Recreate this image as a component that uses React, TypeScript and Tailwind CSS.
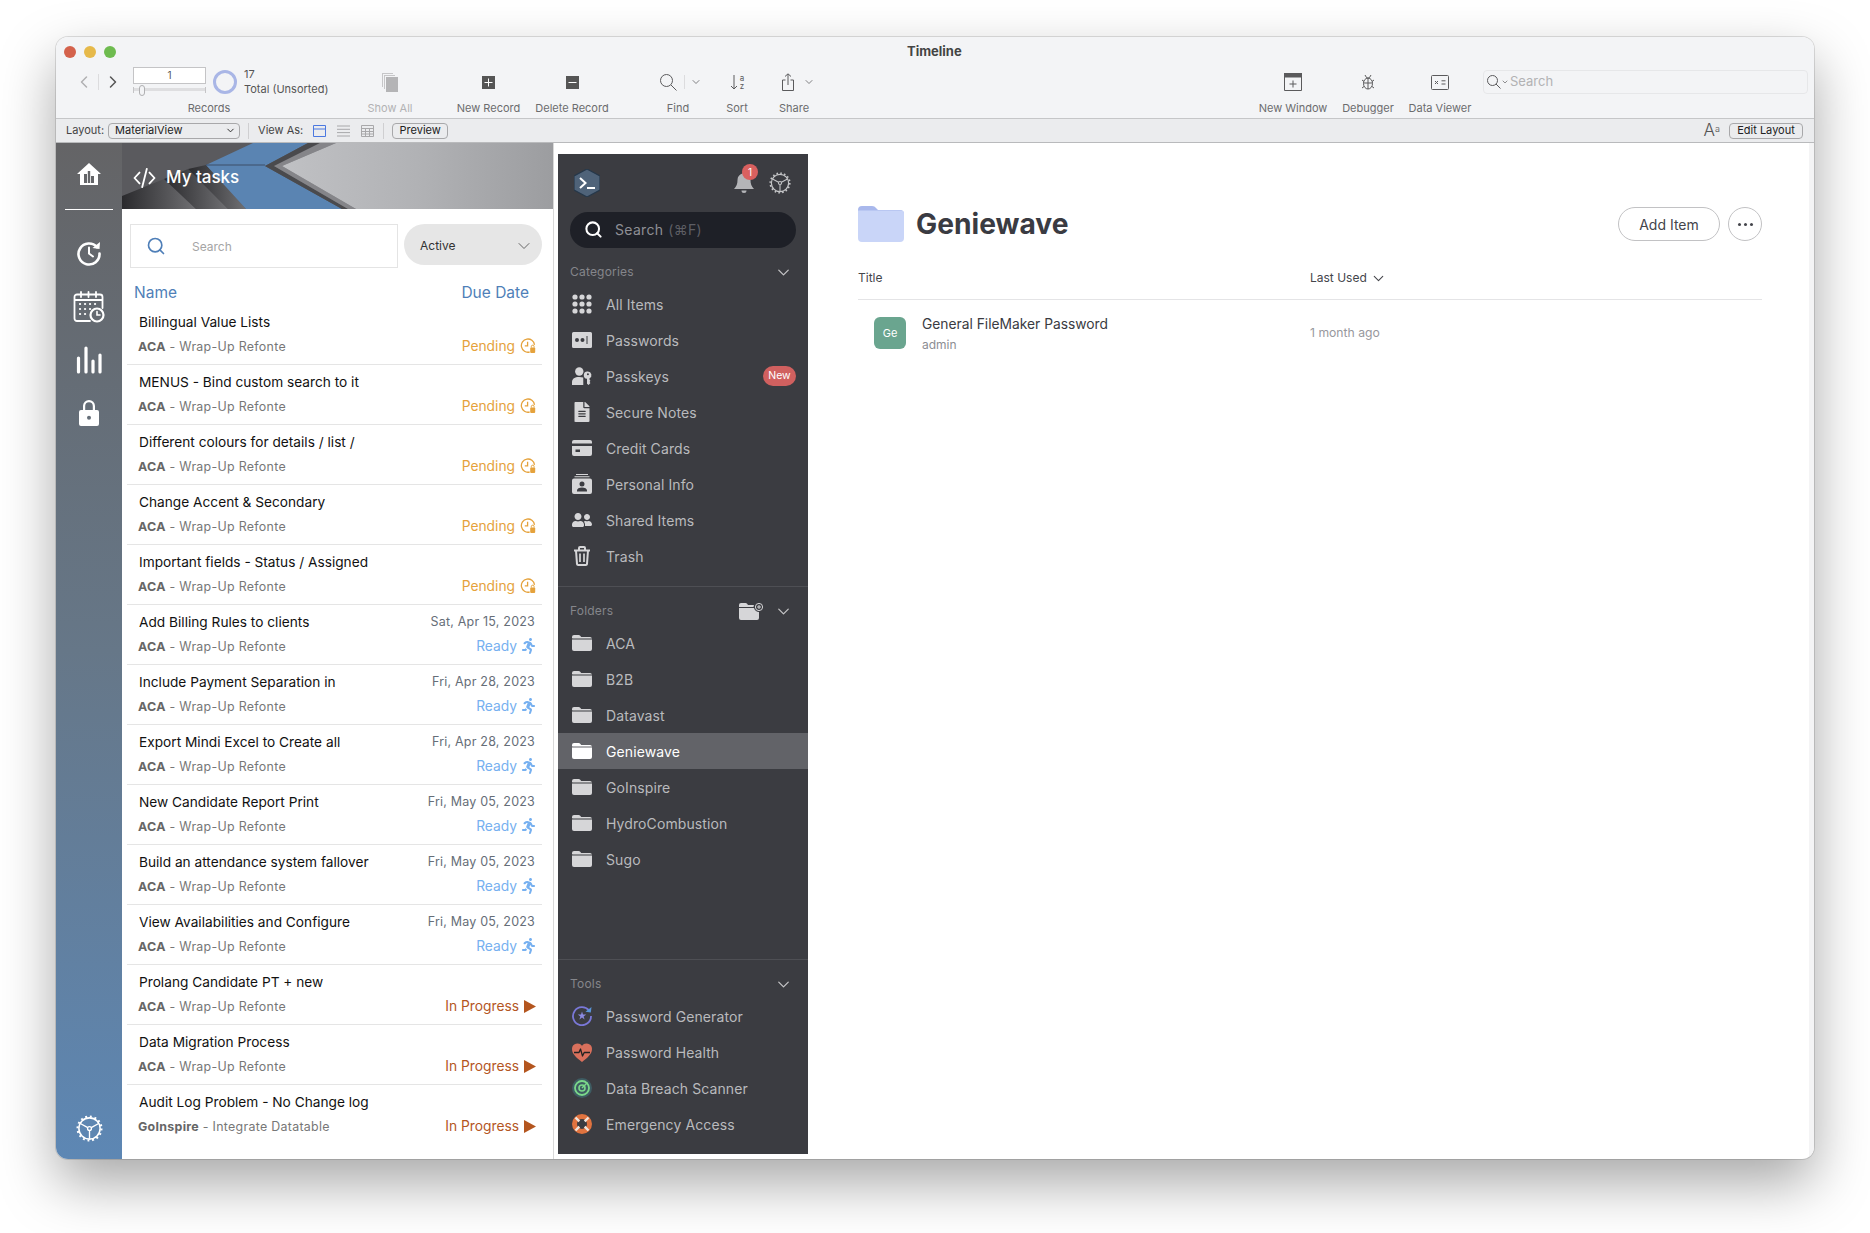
import type { ReactNode } from "react";
import { ChevronDown, ChevronLeft, ChevronRight, Search } from "lucide-react";
import { FaFileAlt, FaRunning, FaUserFriends } from "react-icons/fa";

const sans = "font-['Inter','Liberation_Sans',sans-serif]";

type Task = { title: string; client?: string; project?: string; date?: string; status: "Pending" | "Ready" | "In Progress" };

const tasks: Task[] = [
  { title: "Billingual Value Lists", status: "Pending" },
  { title: "MENUS - Bind custom search to it", status: "Pending" },
  { title: "Different colours for details / list /", status: "Pending" },
  { title: "Change Accent & Secondary", status: "Pending" },
  { title: "Important fields - Status / Assigned", status: "Pending" },
  { title: "Add Billing Rules to clients", date: "Sat, Apr 15, 2023", status: "Ready" },
  { title: "Include Payment Separation in", date: "Fri, Apr 28, 2023", status: "Ready" },
  { title: "Export Mindi Excel to Create all", date: "Fri, Apr 28, 2023", status: "Ready" },
  { title: "New Candidate Report Print", date: "Fri, May 05, 2023", status: "Ready" },
  { title: "Build an attendance system fallover", date: "Fri, May 05, 2023", status: "Ready" },
  { title: "View Availabilities and Configure", date: "Fri, May 05, 2023", status: "Ready" },
  { title: "Prolang Candidate PT + new", status: "In Progress" },
  { title: "Data Migration Process", status: "In Progress" },
  { title: "Audit Log Problem - No Change log", client: "GoInspire", project: "Integrate Datatable", status: "In Progress" },
];

function Gear({ className }: { className: string }) {
  return (
    <svg viewBox="0 0 28 28" className={className} fill="none" stroke="currentColor">
      <circle cx="14" cy="14" r="11" strokeWidth="1.6" />
      <circle cx="14" cy="14" r="12.4" strokeWidth="2.2" strokeDasharray="2 2.87" />
      <circle cx="14" cy="14" r="2" strokeWidth="1.4" />
      <path d="M12.2 13 4.5 8.8M15.8 13l7.7-4.2M14 16v8.5" strokeWidth="1.4" />
    </svg>
  );
}

function FolderGlyph({ className }: { className: string }) {
  return (
    <svg viewBox="0 0 20 16" className={className} fill="currentColor">
      <path d="M0 3.200V2a2 2 0 0 1 2-2h4.600c.7 0 1.200.3 1.600.8l1 1.200H18a2 2 0 0 1 2 1.600H1z" />
      <path d="M0 4.600h20V14a2 2 0 0 1-2 2H2a2 2 0 0 1-2-2z" />
    </svg>
  );
}

function PendingIcon() {
  return (
    <svg viewBox="0 0 16 16" className="h-[16px] w-[16px]" fill="none" stroke="#e5a23c" strokeWidth="1.300">
      <path d="M9.600 14A6.600 6.600 0 1 1 14.500 6.800" />
      <path d="M7.600 3.800v4H4.800" />
      <rect x="10.200" y="9.400" width="5" height="5.600" rx="1" fill="#e5a23c" stroke="none" />
      <path d="M11.300 9.600V8.600a1.400 1.400 0 0 1 2.800 0v1" strokeWidth="1" />
    </svg>
  );
}

function Status({ status }: { status: Task["status"] }) {
  if (status === "Pending") {
    return (
      <div className="mb-[2px] flex items-center gap-[5px] pr-[6px] text-[#e5a23c]">
        Pending <PendingIcon />
      </div>
    );
  }
  if (status === "Ready") {
    return (
      <div className="mb-[2px] flex items-center gap-[5px] pr-[7px] text-[#76b0f0]">
        Ready <FaRunning className="h-[16px] w-[13px]" />
      </div>
    );
  }
  return (
    <div className="mb-[2px] flex items-center gap-[5px] pr-[6px] text-[#b4561f]">
      In Progress
      <svg viewBox="0 0 12 13" className="h-[13px] w-[12px]" fill="currentColor">
        <path d="M0 0 12 6.500 0 13z" />
      </svg>
    </div>
  );
}

function TaskRow({ task }: { task: Task }) {
  return (
    <div className="h-[60px] border-b border-[#e5e5e5] pt-[7px] last:border-b-0">
      <div className="flex h-[20px] items-center justify-between pr-[7px] pl-[12px]">
        <span className="text-[13.700px] text-[#111]">{task.title}</span>
        {task.date && <span className="text-[12.500px] tracking-[0.2px] text-[#666e78]">{task.date}</span>}
      </div>
      <div className="mt-[5px] flex h-[20px] items-center justify-between pl-[11px] text-[13.800px]">
        <span className="mt-[1px] text-[12.400px] tracking-[0.3px] text-[#777]">
          <b className="font-bold text-[#666]">{task.client ?? "ACA"}</b> - {task.project ?? "Wrap-Up Refonte"}
        </span>
        <Status status={task.status} />
      </div>
    </div>
  );
}

function RailIcon({ children }: { children: ReactNode }) {
  return <div className="flex h-[52px] w-full items-center justify-center text-white">{children}</div>;
}

function Rail() {
  return (
    <div className="flex w-[66px] shrink-0 flex-col items-center bg-linear-to-b from-[#646466] via-[#667788] to-[#5d87b4] pb-[17px]">
      <div className="flex h-[66px] w-full items-center justify-center pb-[4px] text-white">
        <svg viewBox="0 0 24 22" className="h-[22px] w-[24px]" fill="currentColor">
          <path fillRule="evenodd" d="M12 0 24 11h-3v11H3V11H0zM7 11v9h3v-9zm3.800-3v12h2.400V8zM14 13v7h3v-7z" />
        </svg>
      </div>
      <div className="h-[1px] w-[48px] bg-white" />
      <div className="h-[17px]" />
      <RailIcon>
        <svg viewBox="0 0 26 26" className="h-[26px] w-[26px]" fill="none" stroke="currentColor" strokeWidth="2.600" strokeLinecap="round">
          <path d="M21 7.200A10.500 10.500 0 1 0 23.500 13.500" />
          <path d="M13 7.500v6l4 3" strokeWidth="2" />
          <path d="M24 2 23.500 9 16.500 8z" fill="currentColor" stroke="none" />
        </svg>
      </RailIcon>
      <div className="h-[2px]" />
      <RailIcon>
        <svg viewBox="0 0 32 32" className="h-[32px] w-[32px]" fill="none" stroke="currentColor" strokeWidth="1.800" strokeLinecap="round">
          <path d="M17 30H4a2.500 2.500 0 0 1-2.500-2.500V6A2.500 2.500 0 0 1 4 3.500h23A2.500 2.500 0 0 1 29.500 6v11" />
          <path d="M8 1v5M15.500 1v5M23 1v5M2 9h27" />
          <path d="M7 13h.1M12 13h.1M17 13h.1M22 13h.1M7 18h.1M12 18h.1M17 18h.1M7 23h.1M12 23h.1" strokeWidth="2.200" />
          <circle cx="24" cy="24" r="6.500" strokeWidth="2.200" />
          <path d="M24 20.500V24h3" strokeWidth="1.600" />
        </svg>
      </RailIcon>
      <div className="h-[1px]" />
      <RailIcon>
        <svg viewBox="0 0 26 28" className="h-[28px] w-[26px]" fill="none" stroke="currentColor" strokeWidth="3.200" strokeLinecap="round">
          <path d="M2.500 12v14M10 2v24M17 15v11M24 9v17" />
        </svg>
      </RailIcon>
      <div className="h-[1px]" />
      <RailIcon>
        <svg viewBox="0 0 20 26" className="h-[26px] w-[20px]" fill="currentColor">
          <path fillRule="evenodd" d="M4 10V6a6 6 0 0 1 12 0v4h2a2 2 0 0 1 2 2v12a2 2 0 0 1-2 2H2a2 2 0 0 1-2-2V12a2 2 0 0 1 2-2zm2.200 0h7.600V6a3.800 3.800 0 0 0-7.600 0zM10 15.800a2 2 0 1 0 0 4 2 2 0 0 0 0-4z" />
        </svg>
      </RailIcon>
      <div className="mt-auto text-white">
        <Gear className="h-[27px] w-[27px]" />
      </div>
    </div>
  );
}

function Banner() {
  return (
    <div className="relative h-[66px] overflow-hidden bg-[#5a5a5e]">
      <svg viewBox="0 0 431 66" preserveAspectRatio="none" className="absolute inset-0 h-full w-full">
        <defs>
          <linearGradient id="steel" x1="0" y1="0" x2="1" y2="0">
            <stop offset="0" stopColor="#c0c1c4" />
            <stop offset="0.5" stopColor="#b1b2b5" />
            <stop offset="1" stopColor="#9c9da0" />
          </linearGradient>
          <linearGradient id="stripe" x1="0" y1="0" x2="1" y2="0">
            <stop offset="0" stopColor="#2a2a2d" />
            <stop offset="1" stopColor="#707073" />
          </linearGradient>
        </defs>
        <path d="M0 53 42 36 74 66H0z" fill="url(#stripe)" />
        <path d="M42 36 66 26 106 66H74z" fill="url(#stripe)" />
        <path d="M66 26 84 22 124 66H106z" fill="url(#stripe)" />
        <path d="M84 22 131 0H186L143 23 220 66H124z" fill="#5a84b2" />
        <path d="M84 22h59" stroke="#3c4f68" strokeWidth="1" />
        <path d="M143 23 186 0H198L152 23 226 66H220z" fill="#4a4a4d" />
        <path d="M152 23 198 0H214L160 23 234 66H226z" fill="#858589" />
        <path d="M160 23 214 0H431V66H234z" fill="url(#steel)" />
      </svg>
      <div className="relative flex h-full items-center gap-[10px] pt-[3px] pl-[11px] text-white">
        <svg viewBox="0 0 24 22" className="h-[20px] w-[23px]" fill="none" stroke="currentColor" strokeWidth="2" strokeLinecap="round" strokeLinejoin="round">
          <path d="M6.500 5 1 11l5.500 6M17.500 5 23 11l-5.500 6M14.500 1 9.500 21" />
        </svg>
        <span className="text-[17px] font-medium">My tasks</span>
      </div>
    </div>
  );
}

function TasksPanel() {
  return (
    <div className="flex w-[432px] shrink-0 flex-col border-r border-[#d9d9d9] bg-white">
      <Banner />
      <div className="flex items-start pt-[15px] pl-[8px]">
        <div className="flex h-[44px] w-[268px] items-center border border-[#e4e4e4] pl-[15px] text-[#4f7fb8]">
          <Search className="h-[20px] w-[20px]" strokeWidth={2} />
          <span className="mt-[1px] ml-[26px] text-[12px] text-[#a5a5a5]">Search</span>
        </div>
        <div className="ml-[6px] flex h-[41px] w-[138px] items-center justify-between rounded-full bg-[#e6e6e6] pt-[2px] pr-[8px] pl-[16px] text-[12px] text-[#333]">
          Active <ChevronDown className="h-[20px] w-[20px] text-[#666]" strokeWidth={1.200} />
        </div>
      </div>
      <div className="flex h-[37px] items-end justify-between pr-[24px] pb-[1px] pl-[12px] text-[15.500px] text-[#4f7fb8]">
        <span>Name</span>
        <span>Due Date</span>
      </div>
      <div className="ml-[5px] w-[415px]">
        {tasks.map((t) => (
          <TaskRow key={t.title} task={t} />
        ))}
      </div>
    </div>
  );
}

function NavRow({ label, icon, selected, extra }: { label: string; icon: ReactNode; selected?: boolean; extra?: ReactNode }) {
  return (
    <div className={selected ? "flex h-[36px] items-center bg-[#626368] pr-[12px] pl-[14px] text-white" : "flex h-[36px] items-center pr-[12px] pl-[14px] text-[#b9babd]"}>
      <div className={selected ? "flex w-[20px] justify-center text-white" : "flex w-[20px] justify-center text-[#d6d6d8]"}>{icon}</div>
      <span className="ml-[14px] text-[14px] tracking-[0.1px]">{label}</span>
      {extra && <div className="ml-auto">{extra}</div>}
    </div>
  );
}

function SectionHead({ label, extra }: { label: string; extra?: ReactNode }) {
  return (
    <div className="flex h-[24px] items-center pr-[15px] pl-[12px] text-[#85868b]">
      <span className="text-[12px] tracking-[0.2px]">{label}</span>
      <div className="ml-auto flex items-center gap-[11px]">
        {extra}
        <ChevronDown className="h-[19px] w-[19px] text-[#c4c4c6]" strokeWidth={1.600} />
      </div>
    </div>
  );
}

const cats: [string, ReactNode][] = [
  [
    "All Items",
    <svg key="a" viewBox="0 0 20 20" className="h-[20px] w-[20px]" fill="currentColor">
      {[3, 10, 17].map((y) => [3, 10, 17].map((x) => <circle key={`${x}-${y}`} cx={x} cy={y} r="2.600" />))}
    </svg>,
  ],
  [
    "Passwords",
    <svg key="b" viewBox="0 0 20 16" className="h-[16px] w-[20px]" fill="currentColor">
      <path fillRule="evenodd" d="M1.500 0h17A1.500 1.500 0 0 1 20 1.500v13a1.500 1.500 0 0 1-1.500 1.500h-17A1.500 1.500 0 0 1 0 14.500v-13A1.500 1.500 0 0 1 1.500 0zM5 6a2 2 0 1 0 0 4 2 2 0 0 0 0-4zm5.500 0a2 2 0 1 0 0 4 2 2 0 0 0 0-4zM14.500 4v8h1V4z" />
    </svg>,
  ],
  [
    "Passkeys",
    <svg key="c" viewBox="0 0 22 20" className="h-[20px] w-[21px]" fill="currentColor">
      <circle cx="8" cy="5" r="4.600" />
      <path d="M0 20v-3.500C0 13 3 11 8 11c1.700 0 3.200.2 4.400.7V20z" />
      <path fillRule="evenodd" d="M17.500 5a4 4 0 0 1 1.800 7.500V14l1 1.200-1 1.300 1 1.200-2 2.300-1.800-1.600v-5.400A4 4 0 0 1 17.500 5zm0 2a1.100 1.100 0 1 0 0 2.200 1.100 1.100 0 0 0 0-2.200z" />
    </svg>,
  ],
  ["Secure Notes", <FaFileAlt key="d" className="h-[20px] w-[16px]" />],
  [
    "Credit Cards",
    <svg key="e" viewBox="0 0 20 16" className="h-[16px] w-[20px]" fill="currentColor">
      <path d="M2 0h16a2 2 0 0 1 2 2v1.500H0V2a2 2 0 0 1 2-2z" />
      <path fillRule="evenodd" d="M0 6h20v8a2 2 0 0 1-2 2H2a2 2 0 0 1-2-2zm3.500 3.500v2.500H8V9.500z" />
    </svg>,
  ],
  [
    "Personal Info",
    <svg key="f" viewBox="0 0 20 20" className="h-[20px] w-[20px]" fill="currentColor">
      <path d="M4 0h12v1H4zM2.500 2.200h15v1h-15z" />
      <path fillRule="evenodd" d="M2 4.500h16a2 2 0 0 1 2 2V18a2 2 0 0 1-2 2H2a2 2 0 0 1-2-2V6.500a2 2 0 0 1 2-2zM10 7.500a2.500 2.500 0 1 0 0 5 2.500 2.500 0 0 0 0-5zM5 17.500h10v-1c0-1.800-2.200-3-5-3s-5 1.200-5 3z" />
    </svg>,
  ],
  ["Shared Items", <FaUserFriends key="g" className="h-[18px] w-[22px]" />],
  [
    "Trash",
    <svg key="h" viewBox="0 0 18 20" className="h-[20px] w-[18px]" fill="none" stroke="currentColor" strokeWidth="2">
      <path d="M1 4.500h16M6 4.500V2a1 1 0 0 1 1-1h4a1 1 0 0 1 1 1v2.500" />
      <path d="M3 4.500 4 18a1.200 1.200 0 0 0 1.200 1h7.600a1.200 1.200 0 0 0 1.200-1l1-13.500" />
      <path d="M7 7.500v8.500M11 7.500v8.500" strokeWidth="1.700" />
    </svg>,
  ],
];

const tools: [string, ReactNode][] = [
  [
    "Password Generator",
    <svg key="a" viewBox="0 0 20 20" className="h-[20px] w-[20px]" fill="none">
      <path d="M17 4.500A9 9 0 1 0 19 10" stroke="#7a78d8" strokeWidth="1.800" />
      <path d="M19.500 1 18.800 6.500 13.500 5.800z" fill="#5a95d8" />
      <path d="M10 5.500 11 8.600h3.200l-2.600 1.900 1 3-2.600-1.900-2.600 1.900 1-3L5.800 8.600H9z" fill="#8b8ae0" />
    </svg>,
  ],
  [
    "Password Health",
    <svg key="b" viewBox="0 0 20 19" className="h-[19px] w-[20px]" fill="none">
      <path d="M10 19C4 14.500 0 11 0 5.800A5.500 5.500 0 0 1 10 2.800 5.500 5.500 0 0 1 20 5.800C20 11 16 14.500 10 19z" fill="#d9705c" />
      <path d="M2 9.500h5l1.500-3.500 2 7 1.700-3.500H18" stroke="#222" strokeWidth="1.300" strokeLinejoin="round" />
    </svg>,
  ],
  [
    "Data Breach Scanner",
    <svg key="c" viewBox="0 0 20 20" className="h-[20px] w-[20px]" fill="none">
      <circle cx="10" cy="10" r="10" fill="#3e5c62" />
      <circle cx="10" cy="10" r="7" stroke="#7bd88a" strokeWidth="1.800" />
      <circle cx="10" cy="10" r="3" stroke="#7bd88a" strokeWidth="1.600" />
      <path d="m10 10 5.500-5.500" stroke="#7bd88a" strokeWidth="1.400" />
    </svg>,
  ],
  [
    "Emergency Access",
    <svg key="d" viewBox="0 0 20 20" className="h-[20px] w-[20px]" fill="none">
      <circle cx="10" cy="10" r="7.500" stroke="#e0733f" strokeWidth="5" />
      <path d="m3.500 3.500 3.800 3.800M16.500 3.500l-3.800 3.800M3.500 16.500l3.800-3.800M16.500 16.500l-3.800-3.800" stroke="#f0e4dc" strokeWidth="2.400" />
    </svg>,
  ],
];

const folders = ["ACA", "B2B", "Datavast", "Geniewave", "GoInspire", "HydroCombustion", "Sugo"];

function VaultNav() {
  return (
    <div className="mt-[11px] mb-[5px] ml-[4px] flex w-[250px] shrink-0 flex-col bg-[#3b3c41]">
      <div className="flex h-[58px] items-center pr-[17px] pl-[16px]">
        <svg viewBox="0 0 26 28" className="h-[28px] w-[26px]">
          <path d="M13 0 26 7v14l-13 7L0 21V7z" fill="#4f6379" stroke="#26384a" strokeWidth="1.200" />
          <path d="m6 9 5.500 5L6 19" fill="none" stroke="#fff" strokeWidth="2" />
          <path d="M13 19h8" stroke="#fff" strokeWidth="2" />
        </svg>
        <div className="relative ml-auto text-[#b4b5b8]">
          <svg viewBox="0 0 20 22" className="h-[22px] w-[20px]" fill="currentColor">
            <path d="M10 0c1 0 1.500.6 1.600 1.500C14.800 2.300 16.500 5 16.500 8c0 4 1 6.500 3.500 9H0c2.500-2.500 3.500-5 3.500-9 0-3 1.700-5.700 4.900-6.500C8.500.6 9 0 10 0zM7.500 18.500h5a2.500 2.500 0 0 1-5 0z" />
          </svg>
          <div className="absolute -top-[8px] left-[8px] flex h-[16px] w-[16px] items-center justify-center rounded-full bg-[#d9605f] text-[10px] text-white">1</div>
        </div>
        <div className="ml-[15px] text-[#c4c5c7]">
          <Gear className="h-[22px] w-[22px]" />
        </div>
      </div>
      <div className="mx-[12px] flex h-[36px] items-center rounded-full bg-[#1e2027] pb-[1px] pl-[14px] text-[14px] tracking-[0.3px] text-[#8e8f95]">
        <Search className="h-[19px] w-[19px] text-white" strokeWidth={2.600} />
        <span className="ml-[12px]">Search</span>
        <span className="ml-[5px] text-[#5d5e64]">(⌘F)</span>
      </div>
      <div className="mt-[12px]">
        <SectionHead label="Categories" />
      </div>
      <div className="mt-[2px]">
        {cats.map(([label, icon]) => (
          <NavRow
            key={label}
            label={label}
            icon={icon}
            extra={label === "Passkeys" ? <div className="flex h-[20px] w-[33px] items-center justify-center rounded-full bg-[#d0605f] text-[10.500px] text-white">New</div> : undefined}
          />
        ))}
      </div>
      <div className="mt-[12px] h-[1px] bg-[#4e4f54]" />
      <div className="mt-[12px]">
        <SectionHead
          label="Folders"
          extra={
            <svg viewBox="0 0 24 17" className="h-[17px] w-[24px] text-[#d6d6d8]" fill="currentColor">
              <path d="M0 3.500V2a2 2 0 0 1 2-2h4.500c.7 0 1.200.3 1.600.8L9 2h6a6 6 0 0 0-.5 2H0zM0 5h15c.7 2.500 3 4 5 4v6a2 2 0 0 1-2 2H2a2 2 0 0 1-2-2z" />
              <circle cx="20" cy="4" r="3.600" fill="none" stroke="currentColor" strokeWidth="1" />
              <path d="M18 4h4M20 2v4" stroke="currentColor" strokeWidth="1" />
            </svg>
          }
        />
      </div>
      <div className="mt-[2px]">
        {folders.map((f) => (
          <NavRow key={f} label={f} selected={f === "Geniewave"} icon={<FolderGlyph className="h-[16px] w-[20px]" />} />
        ))}
      </div>
      <div className="mt-auto h-[1px] bg-[#4e4f54]" />
      <div className="mt-[12px]">
        <SectionHead label="Tools" />
      </div>
      <div className="mt-[2px] mb-[12px]">
        {tools.map(([label, icon]) => (
          <NavRow key={label} label={label} icon={icon} />
        ))}
      </div>
    </div>
  );
}

function VaultContent() {
  return (
    <div className="flex min-w-0 flex-1">
      <div className="flex-1 pt-[63px] pl-[50px]">
        <div className="flex h-[36px] items-center pr-[47px]">
          <svg viewBox="0 0 46 36" className="h-[36px] w-[46px]">
            <path d="M0 8V4a4 4 0 0 1 4-4h10c2 0 3 .8 4 2l2 2h22a4 4 0 0 1 4 4z" fill="#a9b8ec" />
            <path d="M0 4.500h43a3 3 0 0 1 3 3V32a4 4 0 0 1-4 4H4a4 4 0 0 1-4-4z" fill="#c9d5f8" />
          </svg>
          <h1 className="ml-[12px] text-[28.200px] font-bold text-[#3a3b42]">Geniewave</h1>
          <div className="ml-auto flex h-[34px] w-[102px] items-center justify-center rounded-full border border-[#c2c2c4] text-[14px] text-[#44454b]">Add Item</div>
          <div className="ml-[8px] flex h-[34px] w-[34px] items-center justify-center gap-[3px] rounded-full border border-[#c2c2c4]">
            <i className="h-[3px] w-[3px] rounded-full bg-[#44454b]" />
            <i className="h-[3px] w-[3px] rounded-full bg-[#44454b]" />
            <i className="h-[3px] w-[3px] rounded-full bg-[#44454b]" />
          </div>
        </div>
        <div className="mt-[25px] flex h-[33px] w-[904px] items-start border-b border-[#e4e4e6] pt-[2px] text-[12px] text-[#44454b]">
          <span className="h-[18px] w-[452px]">Title</span>
          <span className="flex items-center gap-[3px]">
            Last Used <ChevronDown className="h-[17px] w-[17px]" strokeWidth={1.500} />
          </span>
        </div>
        <div className="mt-[16px] flex h-[34px] items-center pl-[16px]">
          <div className="flex h-[32px] w-[32px] items-center justify-center rounded-[6px] bg-[#6aa58f] text-[11px] text-white">Ge</div>
          <div className="ml-[16px] w-[388px]">
            <div className="text-[13.800px] leading-[18px] text-[#3a3b42]">General FileMaker Password</div>
            <div className="mt-[5px] text-[12px] leading-[14px] text-[#8c8d93]">admin</div>
          </div>
          <span className="text-[12.200px] text-[#97989d]">1 month ago</span>
        </div>
      </div>
      <div className="w-[5px] shrink-0 bg-[#f4f4f5]" />
    </div>
  );
}

function ToolItem({ className, label, muted, children }: { className: string; label: string; muted?: boolean; children: ReactNode }) {
  return (
    <div className={`flex shrink-0 flex-col items-center ${className}`}>
      <div className="flex h-[30px] items-center justify-center text-[#5a5a5c]">{children}</div>
      <div className={muted ? "mt-[4px] text-[11px] leading-[14px] whitespace-nowrap text-[#b2b2b4]" : "mt-[4px] text-[11px] leading-[14px] whitespace-nowrap text-[#6c6c6e]"}>{label}</div>
    </div>
  );
}

function Toolbar() {
  return (
    <div className="h-[82px] shrink-0 border-b border-[#c5c6c8] bg-[#f3f4f6]">
      <div className="relative flex h-[30px] items-center pl-[8px]">
        <div className="flex gap-[8px]">
          <i className="h-[12px] w-[12px] rounded-full bg-[#d4624c]" />
          <i className="h-[12px] w-[12px] rounded-full bg-[#e6b94a]" />
          <i className="h-[12px] w-[12px] rounded-full bg-[#6ebb4f]" />
        </div>
        <span className="absolute left-[851px] text-[13px] font-bold text-[#444] ">Timeline</span>
      </div>
      <div className="flex h-[51px] items-start">
        <div className="ml-[18px] flex h-[30px] w-[59px] shrink-0 items-center">
          <ChevronLeft className="h-[20px] w-[20px] text-[#b0b0b2]" strokeWidth={1.800} />
          <i className="mx-[4px] h-[16px] w-[1px] bg-[#dcdcde]" />
          <ChevronRight className="h-[20px] w-[20px] text-[#555]" strokeWidth={1.800} />
        </div>
        <div className="shrink-0">
          <div className="flex h-[30px] w-[152px] items-start">
            <div className="w-[73px] shrink-0">
              <div className="flex h-[17px] items-center justify-center border border-[#c4c4c6] bg-white text-[10px] text-[#555]">1</div>
              <div className="relative mt-[3px] h-[6px] border-x border-[#c4c4c6]">
                <div className="h-[3px] translate-y-[1px] bg-[#dedee0]" />
                <div className="absolute -top-[2px] left-[5px] h-[11px] w-[6px] rounded-full border border-[#b0b0b2] bg-[#f3f4f6]" />
              </div>
            </div>
            <div className="mt-[3px] ml-[7px] h-[24px] w-[24px] shrink-0 rounded-full border-[3.500px] border-[#a9b6e6]" />
            <div className="ml-[7px] text-[11px] leading-[15px] whitespace-nowrap text-[#555]">
              <div>17</div>
              <div>Total (Unsorted)</div>
            </div>
          </div>
          <div className="mt-[4px] text-center text-[11px] leading-[14px] text-[#6c6c6e]">Records</div>
        </div>
        <ToolItem className="ml-[75px] w-[60px]" label="Show All" muted>
          <svg viewBox="0 0 16 19" className="h-[19px] w-[16px]">
            <path d="M0 0h11v1H1v13H0zM2 2h11v1H3v13H2z" fill="#c6c6c8" />
            <path d="M4 4h12v15H4z" fill="#b4b4b6" />
          </svg>
        </ToolItem>
        <ToolItem className="ml-[28.500px] w-[80px]" label="New Record">
          <svg viewBox="0 0 13 13" className="h-[13px] w-[13px]">
            <path d="M0 0h13v13H0z" fill="#555" />
            <path d="M6.500 2.500v8M2.500 6.500h8" stroke="#fff" strokeWidth="1" />
          </svg>
        </ToolItem>
        <ToolItem className="ml-[1.500px] w-[84px]" label="Delete Record">
          <svg viewBox="0 0 13 13" className="h-[13px] w-[13px]">
            <path d="M0 0h13v13H0z" fill="#555" />
            <path d="M2.500 6.500h8" stroke="#fff" strokeWidth="1" />
          </svg>
        </ToolItem>
        <ToolItem className="ml-[34px] w-[60px]" label="Find">
          <div className="flex w-[60px] items-center pl-[12px]">
            <svg viewBox="0 0 17 17" className="h-[17px] w-[17px]" fill="none" stroke="#5a5a5c" strokeWidth="1">
              <circle cx="6.500" cy="6.500" r="6" />
              <path d="m11 11 5.500 5.500" />
            </svg>
            <i className="ml-[7px] h-[14px] w-[1px] bg-[#dcdcde]" />
            <ChevronDown className="ml-[5px] h-[12px] w-[12px]" strokeWidth={1.500} />
          </div>
        </ToolItem>
        <ToolItem className="ml-[9px] w-[40px]" label="Sort">
          <div className="flex items-center gap-[2px]">
            <svg viewBox="0 0 8 16" className="h-[16px] w-[8px]" fill="none" stroke="#5a5a5c" strokeWidth="1">
              <path d="M4 1v14M1 12l3 3 3-3" />
            </svg>
            <div className="flex flex-col text-[8px] leading-[8px] text-[#5a5a5c]">
              <span>a</span>
              <span>z</span>
            </div>
          </div>
        </ToolItem>
        <ToolItem className="ml-[12px] w-[50px]" label="Share">
          <div className="flex items-center pl-[8px]">
            <svg viewBox="0 0 12 18" className="h-[18px] w-[12px]" fill="none" stroke="#5a5a5c" strokeWidth="1">
              <path d="M3.500 7H.5v10.500h11V7h-3M6 12V1M3 3.500 6 .8l3 2.700" />
            </svg>
            <ChevronDown className="ml-[9px] h-[12px] w-[12px]" strokeWidth={1.500} />
          </div>
        </ToolItem>
        <ToolItem className="ml-[436px] w-[76px]" label="New Window">
          <svg viewBox="0 0 18 18" className="h-[18px] w-[18px]" fill="none" stroke="#5a5a5c" strokeWidth="1">
            <path d="M.5 4h17v13.500H.5z" />
            <path d="M0 0h18v4H0z" fill="#5a5a5c" stroke="none" />
            <path d="M9 7.500v7M5.500 11h7" />
          </svg>
        </ToolItem>
        <ToolItem className="ml-[7px] w-[60px]" label="Debugger">
          <svg viewBox="0 0 12 16" className="h-[16px] w-[12px]" fill="none" stroke="#5a5a5c" strokeWidth="1">
            <ellipse cx="6" cy="9.500" rx="4.500" ry="5.500" />
            <path d="M3 1l1.500 2.500M9 1 7.500 3.500M4 4h4M6 4v11M1.500 9h9M0 6l2 1.500M12 6l-2 1.500M0 14l2-1.500M12 14l-2-1.500" />
          </svg>
        </ToolItem>
        <ToolItem className="ml-[7px] w-[70px]" label="Data Viewer">
          <svg viewBox="0 0 18 15" className="h-[15px] w-[18px]" fill="none" stroke="#5a5a5c" strokeWidth="1">
            <rect x=".5" y=".5" width="17" height="14" rx="1" />
            <path d="m4 6 3 3M7 6 4 9M10.500 5.800h4M10.500 9h4" />
          </svg>
        </ToolItem>
        <div className="mt-[3px] ml-[8px] flex h-[24px] w-[325px] shrink-0 items-center rounded-[4px] border border-[#e6e7e9] pl-[3px] text-[#5a5a5c]">
          <svg viewBox="0 0 14 14" className="h-[14px] w-[14px]" fill="none" stroke="currentColor" strokeWidth="1">
            <circle cx="5.500" cy="5.500" r="5" />
            <path d="m9 9 4.500 4.500" />
          </svg>
          <ChevronDown className="h-[8px] w-[8px]" strokeWidth={2} />
          <span className="ml-[1px] text-[13px] text-[#b2b2b4]">Search</span>
        </div>
      </div>
    </div>
  );
}

function LayoutBar() {
  return (
    <div className="flex h-[24px] shrink-0 items-center border-b border-[#b9babc] bg-[#ebecee] pl-[10px] text-[11px] text-[#444]">
      <span>Layout:</span>
      <div className="ml-[4px] flex h-[16px] w-[132px] items-center justify-between rounded-[4px] border border-[#a8a8aa] pr-[3px] pl-[6px] text-[#222]">
        MaterialView <ChevronDown className="h-[11px] w-[11px]" strokeWidth={2} />
      </div>
      <i className="ml-[8px] h-[16px] w-[1px] bg-[#cfcfd1]" />
      <span className="ml-[9px]">View As:</span>
      <svg viewBox="0 0 13 12" className="ml-[10px] h-[12px] w-[13px]" fill="none" stroke="#4b78e0">
        <path d="M.5.500h12v11H.5zM.5 4h12" />
      </svg>
      <svg viewBox="0 0 13 12" className="ml-[11px] h-[12px] w-[13px]" fill="none" stroke="#a8a8aa">
        <path d="M0 1h13M0 4.300h13M0 7.600h13M0 11h13" />
      </svg>
      <svg viewBox="0 0 13 12" className="ml-[11px] h-[12px] w-[13px]" fill="none" stroke="#a8a8aa">
        <path d="M.5.500h12v11H.5zM.5 3.500h12M.5 6.500h12M.5 9h12M4.500 3.500v8M8.500 3.500v8" />
      </svg>
      <i className="ml-[9px] h-[16px] w-[1px] bg-[#cfcfd1]" />
      <div className="ml-[8px] flex h-[16px] w-[56px] items-center justify-center rounded-[4px] border border-[#a8a8aa] text-[#222]">Preview</div>
      <span className="ml-auto text-[17px] leading-none font-light text-[#555]">
        A<sup className="text-[9px]">a</sup>
      </span>
      <div className="mr-[11px] ml-[9px] flex h-[16px] w-[74px] items-center justify-center rounded-[4px] border border-[#a8a8aa] text-[#222]">Edit Layout</div>
    </div>
  );
}

export default function App() {
  return (
    <div className={`${sans} h-[1233px] w-[1870px] overflow-hidden bg-white pt-[37px] pl-[56px]`}>
      <div className="flex h-[1122px] w-[1758px] flex-col overflow-hidden rounded-[12px] bg-white shadow-[0_0_0_1px_rgba(0,0,0,0.12),0_24px_56px_rgba(0,0,0,0.35)]">
        <Toolbar />
        <LayoutBar />
        <div className="flex min-h-0 flex-1">
          <Rail />
          <TasksPanel />
          <VaultNav />
          <VaultContent />
        </div>
      </div>
    </div>
  );
}
